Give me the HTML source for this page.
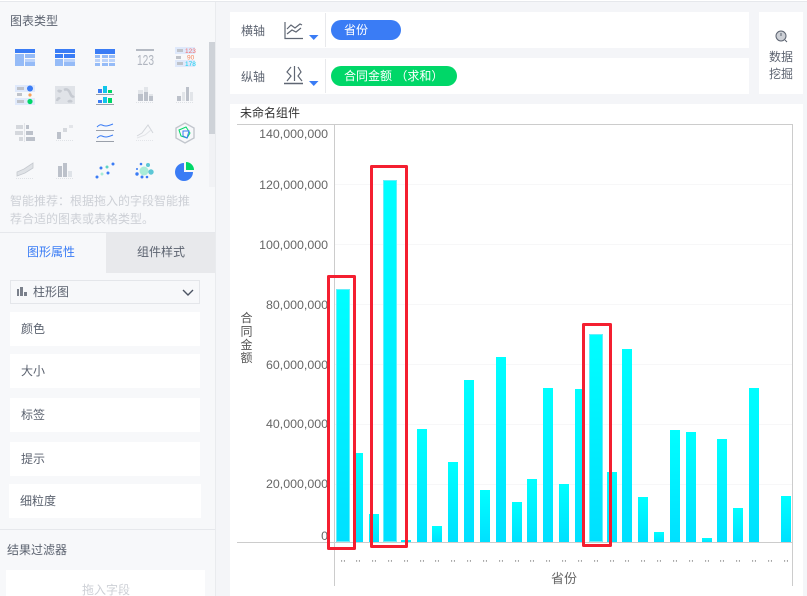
<!DOCTYPE html>
<html lang="zh"><head><meta charset="utf-8"><title>图表</title>
<style>
html,body{margin:0;padding:0;width:807px;height:596px;overflow:hidden;background:#f4f5f8}
body{position:relative;font-family:"Liberation Sans","Noto Sans CJK SC",sans-serif;font-size:12px;color:#5c6370}
.a{position:absolute;white-space:pre;line-height:16px}
.w{position:absolute;background:#fff}
svg{position:absolute;left:0;top:0}
svg text{font-family:"Liberation Sans","Noto Sans CJK SC",sans-serif}
</style></head><body>
<div class="w" style="left:0;top:0;width:807px;height:1px"></div>
<div style="position:absolute;left:0;top:1px;width:807px;height:1px;background:#e6e8ec"></div>
<div style="position:absolute;left:0;top:2px;width:215px;height:594px;background:#f7f8fa"></div>
<div style="position:absolute;left:215px;top:2px;width:1px;height:594px;background:#e9ebee"></div>

<div class="a" style="left:10px;top:13px;color:#5c6370">图表类型</div>
<div style="position:absolute;left:209px;top:42px;width:6px;height:145px;background:#f1f2f5"></div>
<div style="position:absolute;left:209px;top:42px;width:6px;height:92px;background:#ced2d8"></div>
<div class="a" style="left:10px;top:193px;color:#cdd0d6">智能推荐&#xFF1A;根据拖入的字段智能推</div>
<div class="a" style="left:10px;top:211px;color:#cdd0d6">荐合适的图表或表格类型。</div>

<div style="position:absolute;left:0;top:232px;width:215px;height:1px;background:#e6e8ec"></div>
<div style="position:absolute;left:106px;top:233px;width:109px;height:40px;background:#e8e9ec"></div>
<div class="a" style="left:27px;top:244px;color:#3a7cf5">图形属性</div>
<div class="a" style="left:137px;top:244px;color:#5c6370">组件样式</div>

<div style="position:absolute;left:10px;top:280px;width:188px;height:22px;border:1px solid #e4e6ea;background:#f7f8fa"></div>
<div class="a" style="left:33px;top:284px">柱形图</div>
<div class="w" style="left:10px;top:312px;width:190px;height:34px"></div>
<div class="w" style="left:10px;top:354px;width:190px;height:34px"></div>
<div class="w" style="left:10px;top:398px;width:190px;height:34px"></div>
<div class="w" style="left:10px;top:442px;width:190px;height:34px"></div>
<div class="w" style="left:9px;top:484px;width:192px;height:34px"></div>
<div class="a" style="left:21px;top:321px">颜色</div>
<div class="a" style="left:21px;top:363px">大小</div>
<div class="a" style="left:21px;top:407px">标签</div>
<div class="a" style="left:21px;top:451px">提示</div>
<div class="a" style="left:20px;top:493px">细粒度</div>
<div style="position:absolute;left:0;top:529px;width:215px;height:1px;background:#e6e8ec"></div>
<div class="a" style="left:7px;top:542px">结果过滤器</div>
<div class="w" style="left:6px;top:570px;width:199px;height:26px"></div>
<div class="a" style="left:82px;top:582px;color:#cdd0d6">拖入字段</div>

<div class="w" style="left:230px;top:12px;width:519px;height:36px"></div>
<div class="w" style="left:230px;top:58px;width:519px;height:36px"></div>
<div class="w" style="left:759px;top:12px;width:44px;height:82px"></div>
<div class="w" style="left:230px;top:104px;width:573px;height:492px"></div>
<div style="position:absolute;left:325px;top:13px;width:1px;height:34px;background:#e8e9ec"></div>
<div style="position:absolute;left:325px;top:59px;width:1px;height:34px;background:#e8e9ec"></div>
<div class="a" style="left:241px;top:23px">横轴</div>
<div class="a" style="left:241px;top:69px">纵轴</div>
<div class="a" style="left:331px;top:20px;width:70px;height:20px;border-radius:10px;background:#3a7cf5;color:#fff;line-height:20px;text-indent:13px">省份</div>
<div class="a" style="left:331px;top:66px;width:126px;height:20px;border-radius:10px;background:#00d768;color:#fff;line-height:20px;text-indent:13px">合同金额 &#xFF08;求和&#xFF09;</div>
<div class="a" style="left:769px;top:49px;line-height:17px">数据
挖掘</div>
<div class="a" style="left:240px;top:105px;color:#333">未命名组件</div>

<svg width="807" height="596" viewBox="0 0 807 596">
<defs>
<linearGradient id="g" x1="0" y1="0" x2="0" y2="1"><stop offset="0" stop-color="#00ffff"/><stop offset="1" stop-color="#00e0ff"/></linearGradient>
</defs>

<!-- sidebar icons row 1 -->
<g fill="#3a7cf5"><rect x="15" y="49" width="20" height="4"/><rect x="55" y="49" width="20" height="4"/><rect x="95" y="49" width="20" height="5"/><rect x="55" y="54" width="8" height="4"/><rect x="64" y="54" width="11" height="4"/></g>
<g fill="#95bbf7"><rect x="15" y="54" width="9" height="12"/><rect x="25" y="54" width="10" height="4"/><rect x="25" y="62" width="10" height="4"/><rect x="55" y="59" width="8" height="7"/><rect x="64" y="62" width="11" height="4"/><rect x="95" y="55" width="5" height="3"/><rect x="102" y="55" width="6" height="3"/><rect x="109" y="55" width="6" height="3"/><rect x="95" y="63" width="5" height="3"/><rect x="102" y="63" width="6" height="3"/><rect x="109" y="63" width="6" height="3"/></g>
<g fill="#bcd3fa"><rect x="25" y="59" width="10" height="3"/><rect x="64" y="59" width="11" height="3"/><rect x="95" y="59" width="5" height="3"/><rect x="102" y="59" width="6" height="3"/><rect x="109" y="59" width="6" height="3"/></g>
<rect x="136" y="49" width="18" height="2" fill="#b5bac3"/>
<text x="137" y="65" font-size="15" fill="#b0b5bf" textLength="17" lengthAdjust="spacingAndGlyphs">123</text>
<rect x="175" y="47" width="20" height="7" fill="#dfe9fb"/><rect x="175" y="60" width="20" height="7" fill="#dfe9fb"/>
<g fill="#bfc3ca"><rect x="177" y="49" width="6" height="3"/><rect x="176" y="56" width="5" height="3"/><rect x="177" y="62" width="6" height="3"/></g>
<text x="185" y="53" font-size="6.500" fill="#f46c6c">123</text><text x="187" y="59.500" font-size="6.500" fill="#f4835a">90</text><text x="185" y="66" font-size="6.500" fill="#10d0f0">178</text>

<!-- row 2 -->
<rect x="15" y="85" width="20" height="7" fill="#dfe9fb"/><rect x="15" y="98" width="20" height="7" fill="#dfe9fb"/>
<g fill="#bfc3ca"><rect x="17" y="87" width="7" height="3"/><rect x="17" y="93" width="5" height="3"/><rect x="17" y="100" width="7" height="3"/></g>
<circle cx="30" cy="88.500" r="3" fill="#3a7cf5"/><circle cx="30" cy="95" r="1.600" fill="#f6a25c"/><circle cx="30" cy="101.500" r="2.600" fill="#00d768"/>
<rect x="55" y="86" width="20" height="18" fill="#e0e3e8"/>
<g fill="none" stroke="#c6cad1" stroke-width="2.500"><path d="M64 90q4-2 6 3t4 3"/><path d="M57 101q1-4 3-2"/><path d="M58 90q2 3 3 0"/><path d="M68 102q2-2 4 0"/></g>
<g fill="#3a7cf5"><rect x="98" y="89" width="4" height="4"/><rect x="98" y="100" width="4" height="3"/></g>
<g fill="#10c6ea"><rect x="103" y="86" width="4" height="7"/><rect x="103" y="97" width="4" height="6"/></g>
<g fill="#00d768"><rect x="108" y="90" width="4" height="3"/><rect x="108" y="98" width="4" height="5"/></g>
<rect x="96" y="94" width="18" height="1" fill="#9aa0aa"/><rect x="96" y="104" width="18" height="1" fill="#9aa0aa"/>
<g fill="#bcc1ca"><rect x="138" y="94" width="5" height="7"/><rect x="144" y="92" width="4" height="9"/><rect x="149" y="96" width="4" height="5"/><rect x="177" y="96" width="4" height="5"/><rect x="186" y="87" width="3" height="14"/></g>
<g fill="#e2e5e9"><rect x="138" y="90" width="5" height="4"/><rect x="144" y="87" width="4" height="5"/><rect x="149" y="94" width="4" height="2"/><rect x="182" y="92" width="3" height="9"/><rect x="190" y="92" width="3" height="9"/></g>
<path d="M136 102.500h18M176 102.500h18" stroke="#dfe2e6" stroke-dasharray="1 1"/>

<!-- row 3 -->
<g fill="#d5d8dd"><rect x="16" y="125" width="7" height="4"/><rect x="15" y="131" width="8" height="4"/><rect x="19" y="137" width="4" height="4"/></g>
<g fill="#bcc1ca"><rect x="26" y="125" width="3" height="4"/><rect x="26" y="131" width="7" height="4"/><rect x="26" y="137" width="9" height="4"/></g>
<rect x="24" y="123" width="1" height="19" fill="#e3e5e9"/>
<rect x="57" y="132" width="4" height="7" fill="#bcc1ca"/><rect x="63" y="128" width="4" height="4" fill="#d5d8dd"/><rect x="69" y="125" width="4" height="3" fill="#e3e5e9"/>
<path d="M56 140.500h18" stroke="#dfe2e6" stroke-dasharray="1 1"/>
<path d="M97 127q3-3 5-2t4 1 7-2M97 138q3-3 5-2t4 1 7-2" fill="none" stroke="#3a7cf5" stroke-width="1"/>
<rect x="96" y="130" width="18" height="1" fill="#9aa0aa"/><rect x="96" y="141" width="18" height="1" fill="#9aa0aa"/>
<path d="M137 136l5-3 6-8 5 8" fill="none" stroke="#d3d6db"/><path d="M137 138l8-3 6-5" fill="none" stroke="#e3e5e9"/>
<path d="M136 140.500h18" stroke="#e3e5e9" stroke-dasharray="1 1"/>
<path d="M185 123l9 5v10l-9 5-9-5v-10z" fill="none" stroke="#c2c6cd" stroke-width="1.400"/>
<path d="M179 130l7-3 4 6-3 5-6-2z" fill="none" stroke="#00d768"/><path d="M183 131h6l-2 7-4-2z" fill="none" stroke="#3a7cf5"/>

<!-- row 4 -->
<path d="M17 172l7-3 9-6v5l-8 5-8 3z" fill="#dfe2e6" stroke="#c5c9cf" stroke-width=".800"/>
<path d="M16 178.500h18" stroke="#dfe2e6" stroke-dasharray="1 1"/>
<rect x="58" y="166" width="4" height="11" fill="#bcc1ca"/><rect x="63" y="163" width="4" height="14" fill="#bcc1ca"/><rect x="68" y="171" width="4" height="6" fill="#dfe3e8"/>
<path d="M56 178.500h18" stroke="#dfe2e6" stroke-dasharray="1 1"/>
<g fill="#3a7cf5"><circle cx="97" cy="177" r="1.500"/><circle cx="101" cy="168" r="1.500"/><circle cx="113" cy="164" r="1.500"/><circle cx="108" cy="173" r="1.500"/></g>
<circle cx="107" cy="167" r="1.500" fill="#5fd3c4"/><circle cx="102" cy="174" r="1.500" fill="#a8ecd6"/>
<circle cx="144" cy="171" r="4.500" fill="#a9ecd8"/><circle cx="148" cy="165" r="2" fill="#5cc7d6"/><circle cx="151" cy="172" r="2.700" fill="#5cc7d6"/>
<g fill="#3a7cf5"><circle cx="141" cy="164" r="1.300"/><circle cx="137" cy="174" r="1.700"/><circle cx="142" cy="177" r="1.500"/><circle cx="147" cy="177" r="1.300"/><circle cx="137" cy="169" r="1"/></g>
<path d="M184 163a9 9 0 1 0 9 9h-9z" fill="#3a7cf5"/><path d="M186 162a8 8 0 0 1 8 8h-8z" fill="#00d768"/>

<!-- dropdown icon + chevron -->
<g fill="#7a808b"><rect x="17" y="289" width="2" height="7"/><rect x="20" y="287" width="3" height="9"/><rect x="24" y="292" width="3" height="4"/></g>
<path d="M183 290l5 5 5-5" fill="none" stroke="#4c5463" stroke-width="1.400"/>

<!-- axis icons -->
<g fill="none" stroke="#5f6673" stroke-width="1.200"><path d="M285 22v16.500h18"/><path d="M287 29l4-4 4 3 5-4 2 1"/><path d="M287 34l5-4 4 2 5-4"/>
<path d="M284 83.500h19" stroke-width="1.500"/><path d="M291 67l-4 5 4 4-4 5"/><path d="M298 67l3 5-3 4 4 5"/><path d="M294.500 66v15"/></g>
<path d="M309 35h9.500l-4.750 5z" fill="#3a7cf5"/><path d="M309 81h9.500l-4.750 5z" fill="#3a7cf5"/>
<circle cx="781" cy="36" r="5" fill="#cdd0d6" stroke="#5c6370" stroke-width="1"/><path d="M785 40l2 2M781 33v3" stroke="#5c6370" fill="none"/>

<!-- grid -->
<g stroke="#f7f7f8" stroke-width="1"><path d="M335 184.500H792M335 244.500H792M335 304.500H792M335 364.500H792M335 424.500H792M335 484.500H792"/></g>
<g stroke="#cccccc" stroke-width="1" fill="none"><path d="M237 124.500H792.500V586"/><path d="M334.500 125V586"/><path d="M237 542.500H792"/></g>

<!-- y labels -->
<g font-size="12.400" fill="#666" text-anchor="end">
<text x="328" y="138">140,000,000</text><text x="328" y="189">120,000,000</text><text x="328" y="249">100,000,000</text><text x="328" y="309">80,000,000</text><text x="328" y="369">60,000,000</text><text x="328" y="428">40,000,000</text><text x="328" y="488">20,000,000</text><text x="328" y="540">0</text></g>
<text x="551" y="583" font-size="13" fill="#666">省份</text>
<g font-size="12" fill="#555" text-anchor="middle"><text x="246.500" y="322">合</text><text x="246.500" y="335.500">同</text><text x="246.500" y="349">金</text><text x="246.500" y="362">额</text></g>

<!-- bars -->
<g fill="url(#g)">
<rect x="353" y="453" width="10" height="89"/><rect x="369" y="514" width="10" height="28"/><rect x="401" y="540" width="10" height="2"/><rect x="417" y="429" width="10" height="113"/><rect x="432" y="526" width="10" height="16"/><rect x="448" y="462" width="10" height="80"/><rect x="464" y="380" width="10" height="162"/><rect x="480" y="490" width="10" height="52"/><rect x="496" y="357" width="10" height="185"/><rect x="512" y="502" width="10" height="40"/><rect x="527" y="479" width="10" height="63"/><rect x="543" y="388" width="10" height="154"/><rect x="559" y="484" width="10" height="58"/><rect x="575" y="389" width="10" height="153"/><rect x="607" y="472" width="10" height="70"/><rect x="622" y="349" width="10" height="193"/><rect x="638" y="497" width="10" height="45"/><rect x="654" y="532" width="10" height="10"/><rect x="670" y="430" width="10" height="112"/><rect x="686" y="432" width="10" height="110"/><rect x="702" y="538" width="10" height="4"/><rect x="717" y="439" width="10" height="103"/><rect x="733" y="508" width="10" height="34"/><rect x="749" y="388" width="10" height="154"/><rect x="781" y="496" width="10" height="46"/>
<rect x="336.500" y="289.500" width="13" height="252" stroke="#66eefa" stroke-width="1"/><rect x="383.500" y="180.500" width="13" height="361" stroke="#66eefa" stroke-width="1"/><rect x="589.500" y="334.500" width="13" height="207" stroke="#66eefa" stroke-width="1"/>
</g>

<!-- x ticks -->
<g font-size="10" fill="#555" text-anchor="middle">
<text x="343" y="561.500">..</text><text x="358" y="561.500">..</text><text x="374" y="561.500">..</text><text x="390" y="561.500">..</text><text x="406" y="561.500">..</text><text x="422" y="561.500">..</text><text x="437" y="561.500">..</text><text x="453" y="561.500">..</text><text x="469" y="561.500">..</text><text x="485" y="561.500">..</text><text x="501" y="561.500">..</text><text x="517" y="561.500">..</text><text x="532" y="561.500">..</text><text x="548" y="561.500">..</text><text x="564" y="561.500">..</text><text x="580" y="561.500">..</text><text x="596" y="561.500">..</text><text x="612" y="561.500">..</text><text x="627" y="561.500">..</text><text x="643" y="561.500">..</text><text x="659" y="561.500">..</text><text x="675" y="561.500">..</text><text x="691" y="561.500">..</text><text x="707" y="561.500">..</text><text x="722" y="561.500">..</text><text x="738" y="561.500">..</text><text x="754" y="561.500">..</text><text x="770" y="561.500">..</text><text x="786" y="561.500">..</text></g>

<!-- red annotations -->
<g fill="none" stroke="#f41f30" stroke-width="3" stroke-linejoin="round">
<rect x="328.500" y="276.500" width="26" height="272"/>
<rect x="371.500" y="166.500" width="35" height="380"/>
<rect x="583.500" y="324.500" width="27" height="221"/>
</g>
</svg>
</body></html>
